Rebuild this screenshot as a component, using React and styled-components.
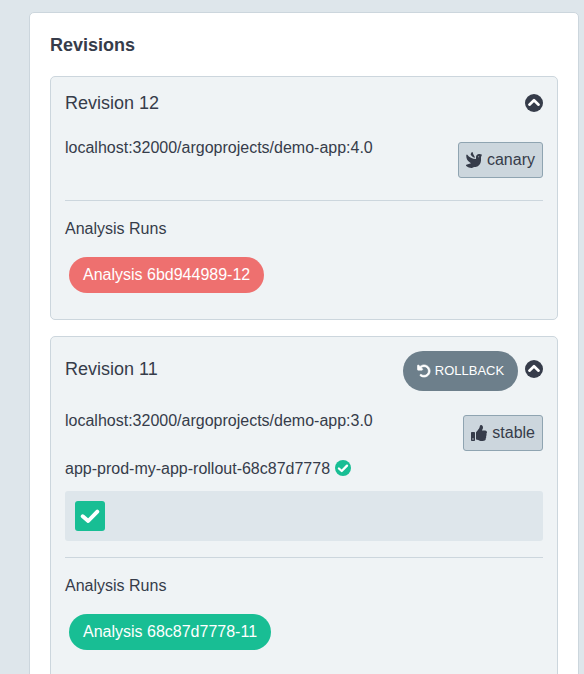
import React from 'react';
import styled, { createGlobalStyle } from 'styled-components';
import { FaThumbsUp } from 'react-icons/fa';

const GlobalStyle = createGlobalStyle`
  * { box-sizing: border-box; }
  html, body { margin: 0; height: 100%; overflow: hidden; background: #dee6eb; }
  body { font: 16px/18px "Liberation Sans", Arial, sans-serif; color: #363c4a; }
`;
const Page = styled.main`
  padding: 12px 5px 0 29px;
  height: 674px;
  overflow: hidden;
`;
const Panel = styled.section`
  height: 720px;
  padding: 20px;
  background: #fff;
  border: 1px solid #ccd6dd;
  border-radius: 5px;
`;
const Title = styled.h3`
  margin: 2px 0 20px;
  font-size: 18px;
  line-height: 21px;
  font-weight: 600;
`;
const Card = styled.article`
  height: ${(p) => p.$height}px;
  margin-bottom: 16px;
  padding: 14px 14px 0;
  background: #eff3f5;
  border: 1px solid #ccd6dd;
  border-radius: 5px;
`;
const CardHeader = styled.header`
  display: flex;
  align-items: flex-start;
  height: ${(p) => p.$height}px;
  font-size: 18px;
`;
const Name = styled.span`
  line-height: 21px;
  margin-top: ${(p) => p.$top}px;
`;
const Actions = styled.div`
  display: flex;
  align-items: flex-start;
  gap: 7px;
  margin-left: auto;
`;
const Toggle = styled.span`
  display: flex;
  margin-top: ${(p) => p.$top}px;
`;
const RollbackButton = styled.button`
  display: flex;
  align-items: center;
  justify-content: center;
  gap: 4px;
  width: 115px;
  height: 40px;
  padding: 0 0 1px;
  border: 0;
  border-radius: 20px;
  background: #6d7f8b;
  color: #fff;
  font: 13px "Liberation Sans", Arial, sans-serif;
`;
const ImageRow = styled.div`
  display: flex;
  align-items: flex-start;
  justify-content: space-between;
  margin-top: ${(p) => p.$gap}px;
  height: 39px;
`;
const Tag = styled.span`
  display: flex;
  align-items: center;
  gap: 5px;
  height: 36px;
  margin-top: 3px;
  padding: 0 7px;
  background: #ccd6dd;
  border: 1px solid #8fa4b1;
  border-radius: 3px;
`;
const PodSetName = styled.div`
  display: flex;
  align-items: flex-start;
  gap: 5px;
  margin: 9px 0 13px;
`;
const Pods = styled.div`
  display: flex;
  height: 50px;
  padding: 10px;
  background: #dee6eb;
  border-radius: 3px;
`;
const Pod = styled.span`
  display: flex;
  align-items: center;
  justify-content: center;
  width: 30px;
  height: 30px;
  border-radius: 3px;
  background: #18be94;
  color: #fff;
`;
const Analysis = styled.div`
  margin-top: ${(p) => p.$gap}px;
  padding-top: 19px;
  border-top: 1px solid #ccd6dd;
`;
const Run = styled.span`
  display: flex;
  align-items: center;
  width: max-content;
  height: 36px;
  margin: 19px 0 0 4px;
  padding: 0 14px;
  border-radius: 18px;
  background: ${(p) => p.$color};
  color: #fff;
`;
const Stroke = styled.path`
  fill: none;
  stroke: ${(p) => p.$color};
  stroke-linecap: round;
  stroke-linejoin: round;
`;

const ChevronUp = () => (
  <svg width="18" height="18" viewBox="0 0 512 512">
    <circle cx="256" cy="256" r="256" fill="#363c4a" />
    <Stroke $color="#fff" strokeWidth="76" d="M126 304 256 178 386 304" />
  </svg>
);
const CircleCheck = () => (
  <svg width="16" height="16" viewBox="0 0 16 16">
    <circle cx="8" cy="8" r="8" fill="#18be94" />
    <Stroke $color="#fff" strokeWidth="2.3" d="M3.9 8.5 6.7 11 12 5.6" />
  </svg>
);
const Check = () => (
  <svg width="20" height="20" viewBox="0 0 20 20">
    <Stroke $color="#fff" strokeWidth="3.9" d="M2.7 10.2 8.2 15 17.3 5.6" />
  </svg>
);
const Dove = () => (
  <svg width="16" height="16" viewBox="0 0 48 48" fill="#363c4a">
    <path d="M1 9C0 18 3 25 11 31L15 34L1 38C-1 39 0 42 2 43C6 47 11 48 16 48C19 48 22 46 25 45H29C39 43 44 35 45 26V15L48 8Q43 5 38 6C32 7 30 11 30 16V21C19 20 9 16 4 8Q2 7 1 9Z" />
    <path d="M14 8Q17 14 26 18V14Q21 8 20 1Q18-1 16 2Q14 5 14 8Z" />
    <circle cx="38" cy="14" r="1.5" fill="#ccd6dd" />
  </svg>
);
const RotateLeft = () => (
  <svg width="14" height="14" viewBox="0 0 512 512" fill="currentColor" stroke="currentColor" strokeWidth="22">
    <path d="M480 256c0 123.4-100.5 223.9-223.9 223.9c-48.84 0-95.17-15.58-134.2-44.86c-14.12-10.59-16.97-30.66-6.375-44.81c10.59-14.12 30.62-16.94 44.81-6.375c27.84 20.91 61 31.94 95.88 31.94C344.3 415.8 416 344.1 416 256s-71.69-159.8-159.8-159.8c-37.46 0-73.09 13.49-101.3 36.64l45.12 45.14c17.01 17.02 4.955 46.1-19.1 46.1H35.17C24.58 224.1 16 215.5 16 204.9V59.04c0-24.04 29.07-36.08 46.07-19.07l47.6 47.63C149.9 52.71 201.5 32.11 256.1 32.11C379.5 32.11 480 132.6 480 256z" />
  </svg>
);

export default function App() {
  return (
    <>
      <GlobalStyle />
      <Page>
        <Panel>
          <Title>Revisions</Title>
          <Card $height={244}>
            <CardHeader $height={25}>
              <Name $top={2}>Revision 12</Name>
              <Actions><Toggle $top={3}><ChevronUp /></Toggle></Actions>
            </CardHeader>
            <ImageRow $gap={23}>
              <span>localhost:32000/argoprojects/demo-app:4.0</span>
              <Tag><Dove />canary</Tag>
            </ImageRow>
            <Analysis $gap={22}>
              Analysis Runs
              <Run $color="#ee706f">Analysis 6bd944989-12</Run>
            </Analysis>
          </Card>
          <Card $height={380}>
            <CardHeader $height={40}>
              <Name $top={8}>Revision 11</Name>
              <Actions>
                <RollbackButton><RotateLeft />ROLLBACK</RollbackButton>
                <Toggle $top={9}><ChevronUp /></Toggle>
              </Actions>
            </CardHeader>
            <ImageRow $gap={21}>
              <span>localhost:32000/argoprojects/demo-app:3.0</span>
              <Tag><FaThumbsUp />stable</Tag>
            </ImageRow>
            <PodSetName>app-prod-my-app-rollout-68c87d7778<CircleCheck /></PodSetName>
            <Pods><Pod><Check /></Pod></Pods>
            <Analysis $gap={16}>
              Analysis Runs
              <Run $color="#18be94">Analysis 68c87d7778-11</Run>
            </Analysis>
          </Card>
        </Panel>
      </Page>
    </>
  );
}
